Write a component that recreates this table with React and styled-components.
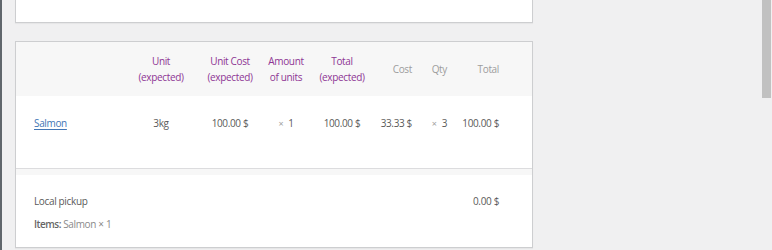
import React from "react";
import styled, { createGlobalStyle } from "styled-components";

const Global = createGlobalStyle`
  html, body { margin: 0; padding: 0; background: #f0f0f1; }
  body {
    font-family: "Open Sans", Lato, sans-serif;
    font-size: 10px;
    letter-spacing: -0.35px;
    color: #5a5a5a;
    overflow: hidden;
  }
`;

const Page = styled.div`
  display: flex;
  min-height: 250px;
  border-left: 2px solid #60666c;
`;

const Content = styled.div`
  display: flex;
  flex-direction: column;
  gap: 18px;
  padding-left: 13px;
  width: 518px;
`;

const Card = styled.div`
  background: #fff;
  border: 1px solid #cdced0;
  box-shadow: 0 1px 1px rgba(0, 0, 0, 0.04);
  ${(p) => p.$cut && `border-top: 0; height: 22px;`}
`;

const Grid = styled.div`
  display: grid;
  grid-template-columns: 110px 70px 68px 44px 68px 36px 35px 52px;
  padding-right: 33px;
  align-items: ${(p) => (p.$top ? "start" : "center")};
  padding-top: ${(p) => (p.$top ? 19 : 0)}px;
  background: ${(p) => p.$bg || "#fff"};
  height: ${(p) => p.$h}px;
  border-bottom: ${(p) => (p.$line ? "1px solid #dcdcde" : "0")};
  box-sizing: border-box;
`;

const Cell = styled.div`
  text-align: ${(p) => p.$align || "center"};
  line-height: 16px;
  padding-left: ${(p) => p.$pl || 0}px;
  color: #5a5a5a;
  white-space: nowrap;
`;

const HeadCell = styled(Cell)`
  color: ${(p) => (p.$muted ? "#9d9d9d" : "#8e3594")};
`;

const ItemLink = styled.a`
  color: #4276b5;
  text-decoration: underline;
  text-underline-offset: 2px;
`;

const Times = styled.span`
  color: #a0a0a0;
  font-size: 9px;
  margin-right: 5px;
`;

const Strip = styled.div`
  height: 6px;
  background: #f7f7f7;
`;

const Shipping = styled.div`
  display: grid;
  grid-template-columns: 1fr 52px;
  padding: 18px 33px 14px 18px;
  row-gap: 6px;
  height: 72px;
  box-sizing: border-box;
`;

const ShipName = styled.div`
  line-height: 16px;
`;

const ShipMeta = styled.div`
  line-height: 16px;
  color: #8a8a8a;
  grid-column: 1 / span 2;
  b { color: #666; font-weight: 600; letter-spacing: -0.5px; }
`;

const ShipTotal = styled.div`
  line-height: 16px;
  text-align: right;
`;

const Scrollbar = styled.div`
  position: fixed;
  top: 0;
  right: 1px;
  width: 9px;
  height: 98px;
  background: #c1c1c1;
`;

export default function App() {
  return (
    <>
      <Global />
      <Page>
        <Content>
          <Card $cut />
          <Card>
            <Grid $bg="#f7f7f7" $h={54}>
              <Cell />
              <HeadCell>Unit<br />(expected)</HeadCell>
              <HeadCell>Unit Cost<br />(expected)</HeadCell>
              <HeadCell>Amount<br />of units</HeadCell>
              <HeadCell>Total<br />(expected)</HeadCell>
              <HeadCell $muted $align="right">Cost</HeadCell>
              <HeadCell $muted $align="right">Qty</HeadCell>
              <HeadCell $muted $align="right">Total</HeadCell>
            </Grid>
            <Grid $h={73} $line $top>
              <Cell $align="left" $pl={18}>
                <ItemLink href="#">Salmon</ItemLink>
              </Cell>
              <Cell>3kg</Cell>
              <Cell>100.00 $</Cell>
              <Cell><Times>×</Times>1</Cell>
              <Cell>100.00 $</Cell>
              <Cell $align="right">33.33 $</Cell>
              <Cell $align="right"><Times>×</Times>3</Cell>
              <Cell $align="right">100.00 $</Cell>
            </Grid>
            <Strip />
            <Shipping>
              <ShipName>Local pickup</ShipName>
              <ShipTotal>0.00 $</ShipTotal>
              <ShipMeta><b>Items:</b> Salmon × 1</ShipMeta>
            </Shipping>
          </Card>
        </Content>
      </Page>
      <Scrollbar />
    </>
  );
}
